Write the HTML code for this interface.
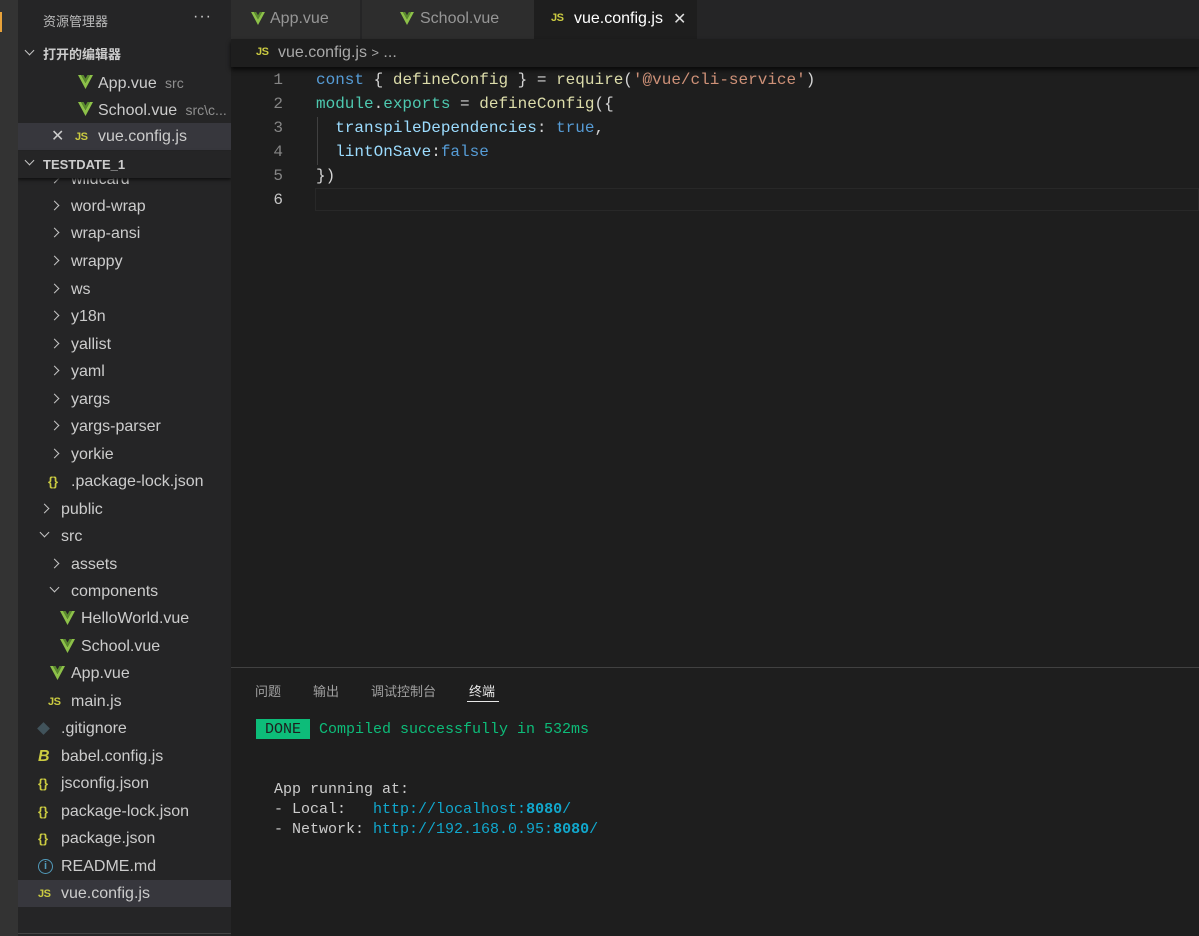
<!DOCTYPE html>
<html><head><meta charset="utf-8"><style>
*{margin:0;padding:0;box-sizing:border-box}
body{width:1199px;height:936px;background:#1e1e1e;overflow:hidden;position:relative;font-family:"Liberation Sans","Noto Sans CJK SC",sans-serif;color:#cccccc}
.abs{position:absolute}
#act{left:0;top:0;width:18px;height:936px;background:#333333}
#side{left:18px;top:0;width:213px;height:936px;background:#252526;overflow:hidden}
.row{position:absolute;left:0;width:213px;height:27px;line-height:28px;font-size:16px;color:#cccccc;white-space:nowrap}
.chev{position:absolute;top:9px;width:7px;height:7px;border-right:1.4px solid #c5c5c5;border-bottom:1.4px solid #c5c5c5}
.r{transform:rotate(-45deg)}
.d{transform:rotate(45deg);top:6px}
.js{position:absolute;color:#cbcb41;font-weight:bold;font-size:11px;letter-spacing:-0.5px}
.br{position:absolute;color:#cbcb41;font-weight:bold;font-size:13px}
.code{font-family:"Liberation Mono",monospace;font-size:16px}
.ln{position:absolute;left:231px;width:52px;text-align:right;color:#858585}
.cl{position:absolute;left:316px;white-space:pre;color:#d4d4d4}
</style></head><body>
<div id="act" class="abs"></div>
<div class="abs" style="left:0;top:12px;width:2px;height:20px;background:#e8a23a"></div>
<div id="side" class="abs">
 <div class="abs" style="left:25px;top:11px;font-size:13px;color:#bbbbbb">资源管理器</div>
 <div class="abs" style="left:175px;top:8px;font-size:16px;color:#ccc;letter-spacing:1px">···</div>
 <div class="row" style="top:41px;font-weight:bold;font-size:13px"><span class="chev d" style="left:8px"></span><span style="position:absolute;left:25px">打开的编辑器</span></div>
 <div class="row" style="top:69px"><svg class="abs" style="left:60px;top:6px" width="15" height="14" viewBox="0 0 15 14"><path d="M0 0h3l4.5 8L12 0h3L7.5 14z" fill="#8dc149"/><path d="M3 0h2.5l2 3.5 2-3.5H12L7.5 8z" fill="#5a8a2e"/></svg><span style="position:absolute;left:80px">App.vue <span style="font-size:14px;color:#8f8f8f">&nbsp;src</span></span></div>
 <div class="row" style="top:96px"><svg class="abs" style="left:60px;top:6px" width="15" height="14" viewBox="0 0 15 14"><path d="M0 0h3l4.5 8L12 0h3L7.5 14z" fill="#8dc149"/><path d="M3 0h2.5l2 3.5 2-3.5H12L7.5 8z" fill="#5a8a2e"/></svg><span style="position:absolute;left:80px">School.vue <span style="font-size:14px;color:#8f8f8f">&nbsp;src\c...</span></span></div>
 <div class="row" style="top:123px;background:#37373d"><span class="abs" style="left:33px;font-size:16px;color:#ccc">✕</span><span class="js" style="left:57px;top:0">JS</span><span style="position:absolute;left:80px">vue.config.js</span></div>
 <div class="abs" style="left:0;top:151px;width:213px;height:27px;background:#252526;box-shadow:0 2px 3px #111;z-index:2"></div>
 <div class="row" style="top:151px;font-weight:bold;font-size:13px;z-index:3"><span class="chev d" style="left:8px"></span><span style="position:absolute;left:25px">TESTDATE_1</span></div>
 <div style="position:absolute;left:0;top:0">
 <div class="row" style="top:166px"><span class="chev r" style="left:33px"></span><span style="position:absolute;left:53px">wildcard</span></div>
 <div class="row" style="top:193px"><span class="chev r" style="left:33px"></span><span style="position:absolute;left:53px">word-wrap</span></div>
 <div class="row" style="top:220px"><span class="chev r" style="left:33px"></span><span style="position:absolute;left:53px">wrap-ansi</span></div>
 <div class="row" style="top:248px"><span class="chev r" style="left:33px"></span><span style="position:absolute;left:53px">wrappy</span></div>
 <div class="row" style="top:276px"><span class="chev r" style="left:33px"></span><span style="position:absolute;left:53px">ws</span></div>
 <div class="row" style="top:303px"><span class="chev r" style="left:33px"></span><span style="position:absolute;left:53px">y18n</span></div>
 <div class="row" style="top:331px"><span class="chev r" style="left:33px"></span><span style="position:absolute;left:53px">yallist</span></div>
 <div class="row" style="top:358px"><span class="chev r" style="left:33px"></span><span style="position:absolute;left:53px">yaml</span></div>
 <div class="row" style="top:386px"><span class="chev r" style="left:33px"></span><span style="position:absolute;left:53px">yargs</span></div>
 <div class="row" style="top:413px"><span class="chev r" style="left:33px"></span><span style="position:absolute;left:53px">yargs-parser</span></div>
 <div class="row" style="top:441px"><span class="chev r" style="left:33px"></span><span style="position:absolute;left:53px">yorkie</span></div>
 <div class="row" style="top:468px"><span class="br" style="left:30px">{}</span><span style="position:absolute;left:53px">.package-lock.json</span></div>
 <div class="row" style="top:496px"><span class="chev r" style="left:23px"></span><span style="position:absolute;left:43px">public</span></div>
 <div class="row" style="top:523px"><span class="chev d" style="left:23px"></span><span style="position:absolute;left:43px">src</span></div>
 <div class="row" style="top:551px"><span class="chev r" style="left:33px"></span><span style="position:absolute;left:53px">assets</span></div>
 <div class="row" style="top:578px"><span class="chev d" style="left:33px"></span><span style="position:absolute;left:53px">components</span></div>
 <div class="row" style="top:605px"><svg class="abs" style="left:42px;top:6px" width="15" height="14" viewBox="0 0 15 14"><path d="M0 0h3l4.5 8L12 0h3L7.5 14z" fill="#8dc149"/><path d="M3 0h2.5l2 3.5 2-3.5H12L7.5 8z" fill="#5a8a2e"/></svg><span style="position:absolute;left:63px">HelloWorld.vue</span></div>
 <div class="row" style="top:633px"><svg class="abs" style="left:42px;top:6px" width="15" height="14" viewBox="0 0 15 14"><path d="M0 0h3l4.5 8L12 0h3L7.5 14z" fill="#8dc149"/><path d="M3 0h2.5l2 3.5 2-3.5H12L7.5 8z" fill="#5a8a2e"/></svg><span style="position:absolute;left:63px">School.vue</span></div>
 <div class="row" style="top:660px"><svg class="abs" style="left:32px;top:6px" width="15" height="14" viewBox="0 0 15 14"><path d="M0 0h3l4.5 8L12 0h3L7.5 14z" fill="#8dc149"/><path d="M3 0h2.5l2 3.5 2-3.5H12L7.5 8z" fill="#5a8a2e"/></svg><span style="position:absolute;left:53px">App.vue</span></div>
 <div class="row" style="top:688px"><span class="js" style="left:30px">JS</span><span style="position:absolute;left:53px">main.js</span></div>
 <div class="row" style="top:715px"><span class="abs" style="left:21px;top:9px;width:9px;height:9px;background:#41535b;transform:rotate(45deg)"></span><span style="position:absolute;left:43px">.gitignore</span></div>
 <div class="row" style="top:743px"><span class="abs" style="left:20px;color:#cbcb41;font-style:italic;font-weight:bold;font-size:16px">B</span><span style="position:absolute;left:43px">babel.config.js</span></div>
 <div class="row" style="top:770px"><span class="br" style="left:20px">{}</span><span style="position:absolute;left:43px">jsconfig.json</span></div>
 <div class="row" style="top:798px"><span class="br" style="left:20px">{}</span><span style="position:absolute;left:43px">package-lock.json</span></div>
 <div class="row" style="top:825px"><span class="br" style="left:20px">{}</span><span style="position:absolute;left:43px">package.json</span></div>
 <div class="row" style="top:853px"><span class="abs" style="left:20px;top:6px;width:15px;height:15px;border:1.5px solid #519aba;border-radius:50%;color:#519aba;font-size:11px;line-height:12px;text-align:center;font-weight:bold">i</span><span style="position:absolute;left:43px">README.md</span></div>
 <div class="row" style="top:880px;background:#37373d"><span class="js" style="left:20px">JS</span><span style="position:absolute;left:43px">vue.config.js</span></div>
 </div>
 <div class="abs" style="left:0;top:933px;width:213px;height:1px;background:#444"></div>
</div>
<!-- tabs -->
<div class="abs" style="left:231px;top:0;width:968px;height:39px;background:#252526"></div>
<div class="abs" style="left:231px;top:0;width:130px;height:39px;background:#2d2d2d;border-right:1px solid #252526"><svg class="abs" style="left:20px;top:12px" width="14" height="13" viewBox="0 0 15 14"><path d="M0 0h3l4.5 8L12 0h3L7.5 14z" fill="#8dc149"/><path d="M3 0h2.5l2 3.5 2-3.5H12L7.5 8z" fill="#5a8a2e"/></svg><span class="abs" style="left:39px;top:10px;font-size:16px;color:#969696">App.vue</span></div>
<div class="abs" style="left:362px;top:0;width:172px;height:39px;background:#2d2d2d"><svg class="abs" style="left:38px;top:12px" width="14" height="13" viewBox="0 0 15 14"><path d="M0 0h3l4.5 8L12 0h3L7.5 14z" fill="#8dc149"/><path d="M3 0h2.5l2 3.5 2-3.5H12L7.5 8z" fill="#5a8a2e"/></svg><span class="abs" style="left:58px;top:10px;font-size:16px;color:#969696">School.vue</span></div>
<div class="abs" style="left:534px;top:0;width:163px;height:39px;background:#1e1e1e"><span class="js" style="left:17px;top:12px">JS</span><span class="abs" style="left:40px;top:10px;font-size:16px;color:#ffffff">vue.config.js</span><span class="abs" style="left:139px;top:9px;font-size:16px;color:#ddd">✕</span></div>
<!-- breadcrumb -->
<div class="abs" style="left:231px;top:39px;width:968px;height:28px;background:#1e1e1e;box-shadow:0 3px 4px #0a0a0a"><span class="js" style="left:25px;top:7px">JS</span><span class="abs" style="left:47px;top:5px;font-size:16px;color:#a9a9a9">vue.config.js <span style="font-size:13px">&gt;</span> ...</span></div>
<!-- code -->
<div class="code" style="position:absolute;left:0;top:2px;width:1199px">
<div class="ln" style="top:69px">1</div><div class="ln" style="top:93px">2</div><div class="ln" style="top:117px">3</div><div class="ln" style="top:141px">4</div><div class="ln" style="top:165px">5</div><div class="ln" style="top:189px;color:#c6c6c6">6</div>
<div class="abs" style="left:315px;top:186px;width:884px;height:23px;border:1px solid #282828"></div>
<div class="abs" style="left:317px;top:115px;width:1px;height:48px;background:#404040"></div>
<div class="cl" style="top:69px"><span style="color:#569cd6">const</span> <span style="color:#d4d4d4">{</span> <span style="color:#dcdcaa">defineConfig</span> } = <span style="color:#dcdcaa">require</span>(<span style="color:#ce9178">'@vue/cli-service'</span>)</div>
<div class="cl" style="top:93px"><span style="color:#4ec9b0">module</span>.<span style="color:#4ec9b0">exports</span> = <span style="color:#dcdcaa">defineConfig</span>({</div>
<div class="cl" style="top:117px">  <span style="color:#9cdcfe">transpileDependencies</span>: <span style="color:#569cd6">true</span>,</div>
<div class="cl" style="top:141px">  <span style="color:#9cdcfe">lintOnSave</span>:<span style="color:#569cd6">false</span></div>
<div class="cl" style="top:165px">})</div>
</div>
<!-- panel -->
<div class="abs" style="left:231px;top:667px;width:968px;height:269px;background:#1e1e1e;border-top:1px solid #414141"></div>
<div class="abs" style="left:255px;top:681px;font-size:13px;color:#a0a0a0">问题</div>
<div class="abs" style="left:313px;top:681px;font-size:13px;color:#a0a0a0">输出</div>
<div class="abs" style="left:371px;top:681px;font-size:13px;color:#a0a0a0">调试控制台</div>
<div class="abs" style="left:469px;top:681px;font-size:13px;color:#e7e7e7">终端</div>
<div class="abs" style="left:467px;top:701px;width:32px;height:1px;background:#e7e7e7"></div>
<div class="code" style="font-size:15px">
<div class="abs" style="left:256px;top:719px;width:54px;height:20px;background:#0dbc79;color:#1e1e1e;line-height:21px;text-align:center">DONE</div>
<div class="abs" style="left:319px;top:720px;line-height:20px;color:#0dbc79;white-space:pre">Compiled successfully in 532ms</div>
<div class="abs" style="left:274px;top:780px;line-height:20px;color:#cccccc;white-space:pre">App running at:
- Local:   <span style="color:#11a8cd">http://localhost:<b>8080</b>/</span>
- Network: <span style="color:#11a8cd">http://192.168.0.95:<b>8080</b>/</span></div>
</div>
</body></html>
